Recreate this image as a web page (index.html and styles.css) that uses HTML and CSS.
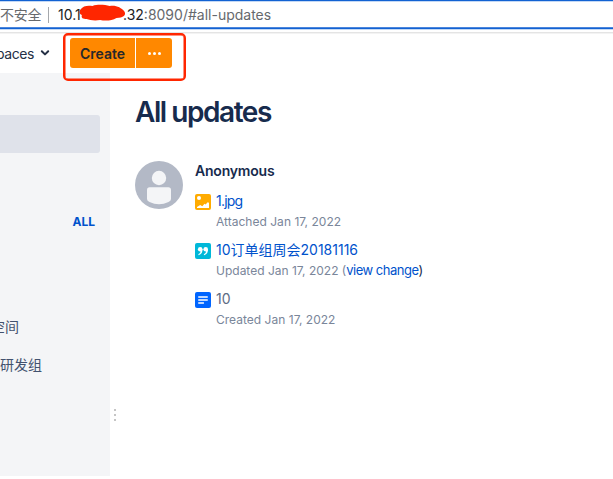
FILE: index.html
```
<!DOCTYPE html>
<html lang="zh">
<head>
<meta charset="utf-8">
<title>All updates</title>
<link rel="stylesheet" href="styles.css">
</head>
<body>
<div class="address">
  <span class="insecure">不安全</span>
  <span class="divider"></span>
  <span class="host">10.1</span>
  <span class="host-end">.32</span><span class="path">:8090/#all-updates</span>
  <svg class="scribble" width="48" height="18" viewBox="0 0 50 18" preserveAspectRatio="none"><path d="M2 5C4 2 9 1 14 2C20 0 27 1 32 2C39 1 44 4 47 7C50 11 46 14 39 14C34 17 27 17 22 16C16 17 11 16 8 15C4 15 2 14 3 11C0 10 0 7 2 5Z" fill="#ff2600"/></svg>
</div>
<header class="header">
  <span class="spaces">paces</span>
  <svg class="chevron" width="10" height="8" viewBox="0 0 10 8"><path d="M1.8 2.2L5 5.4L8.2 2.2" fill="none" stroke="#253045" stroke-width="2" stroke-linecap="round" stroke-linejoin="round"/></svg>
  <div class="create-group">
    <button class="create">Create</button>
    <button class="more" aria-label="More"><i></i><i></i><i></i></button>
    <span class="highlight"></span>
  </div>
</header>
<div class="page">
  <aside class="sidebar">
    <div class="selected"></div>
    <a class="all">ALL</a>
    <div class="space">空间</div>
    <div class="space team">研发组</div>
  </aside>
  <div class="handle"><i></i><i></i><i></i></div>
  <main class="content">
    <h1>All updates</h1>
    <div class="feed">
      <svg class="avatar" width="48" height="48" viewBox="0 0 48 48"><circle cx="24" cy="24" r="24" fill="#b3b9c6"/><circle cx="24" cy="17" r="7.2" fill="#f4f5f7"/><path d="M12 29Q12 26.3 14.7 26.3H33.3Q36 26.3 36 29V38Q36 40 33.5 41Q24 45.5 14.5 41Q12 40 12 38Z" fill="#f4f5f7"/></svg>
      <div class="updates">
        <div class="author">Anonymous</div>
        <div class="item">
          <svg width="16" height="16" viewBox="0 0 16 16"><rect width="16" height="16" rx="2" fill="#ffab00"/><circle cx="4" cy="4" r="2" fill="#fff"/><path d="M2 14V13L5.2 11L7.3 12.3L9.5 9.8L10.5 10.5L13 8L14 9.3V14Z" fill="#fff"/></svg>
          <div><a class="title jpg">1.jpg</a><p class="m1">Attached Jan 17, 2022</p></div>
        </div>
        <div class="item">
          <svg width="16" height="16" viewBox="0 0 16 16"><rect width="16" height="16" rx="2" fill="#00b8d9"/><g fill="#fff"><circle cx="5.2" cy="6.3" r="2.3"/><path d="M7.5 6C7.7 9 6.5 11.3 3.6 12.2L3.3 11.2C4.9 10.5 5.6 9.5 5.5 8Z"/><circle cx="10.7" cy="6.3" r="2.3"/><path d="M13 6C13.2 9 12 11.3 9.1 12.2L8.8 11.2C10.4 10.5 11.1 9.5 11 8Z"/></g></svg>
          <div><a class="title cjk">10订单组周会20181116</a><p class="m2">Updated Jan 17, 2022 (<a class="change">view change</a><b>)</b></p></div>
        </div>
        <div class="item">
          <svg width="16" height="16" viewBox="0 0 16 16"><rect width="16" height="16" rx="2" fill="#0065ff"/><path d="M3.7 5H12.3M3.7 8H12.3M3.7 11H8.5" stroke="#fff" stroke-width="1.3" stroke-linecap="round"/></svg>
          <div><a class="title plain">10</a><p class="m3">Created Jan 17, 2022</p></div>
        </div>
      </div>
    </div>
  </main>
</div>
</body>
</html>
```
FILE: styles.css
```
* { box-sizing: border-box; }
body {
  margin: 0;
  width: 613px;
  height: 479px;
  overflow: hidden;
  background: #fff;
  color: #172b4d;
  font-family: Inter, "Noto Sans CJK SC", sans-serif;
  font-size: 14px;
}
.address {
  position: relative;
  display: flex;
  align-items: center;
  height: 29px;
  border-top: 1px solid #1262d2;
  border-bottom: 1px solid #1262d2;
  box-shadow: inset 0 1px #c3d8f5, inset 0 -1px #4b86dc, 0 1px #c3d8f5;
  line-height: 20px;
  white-space: nowrap;
  color: #66696d;
}
.insecure { width: 41px; flex: none; letter-spacing: -.2px; }
.divider { width: 1px; height: 16px; margin: 0 9px 0 7px; background: #a5a8ac; }
.host { width: 65px; color: #202124; }
.host-end { color: #202124; }
.scribble { position: absolute; left: 79px; top: 3px; }
.header {
  display: flex;
  height: 44px;
  padding-top: 9px;
  background: linear-gradient(#e4e4e4 50%, #f3f3f3 50%) 0 3px / 100% 2px no-repeat;
}
.spaces { width: 34px; display: flex; justify-content: flex-end; line-height: 31px; color: #253045; letter-spacing: -.4px; }
.chevron { margin: 11px 20px 0 6px; flex: none; }
.create-group { position: relative; display: flex; gap: 1px; height: 30px; }
button { border: 0; padding: 0; background: #ff8800; font: inherit; }
.create { width: 65px; border-radius: 3px 0 0 3px; font-weight: 600; color: #26272b; }
.more { display: flex; width: 36px; align-items: center; justify-content: center; gap: 2px; border-radius: 0 3px 3px 0; }
.more i { width: 3px; height: 3px; border-radius: 50%; background: #fff; }
.highlight { position: absolute; left: -7px; top: -5px; width: 123px; height: 48px; border: 2px solid #ff2600; border-radius: 5px; box-shadow: inset 0 0 0 .5px #ff2600; }
.page { display: flex; height: 403px; }
.sidebar { width: 110px; flex: none; background: #f4f5f7; padding-top: 42px; }
.selected { width: 100px; height: 38px; border-radius: 0 3px 3px 0; background: #dfe2ea; }
.all { display: block; margin: 61px 15px 0 0; text-align: right; font-size: 12px; line-height: 16px; font-weight: 700; color: #0052cc; }
.space { width: 19px; display: flex; justify-content: flex-end; margin-top: 87px; line-height: 20px; color: #42526e; white-space: nowrap; }
.team { width: 42px; margin-top: 18px; }
.handle { display: flex; flex-direction: column; gap: 3px; width: 10px; padding: 336px 0 0 4px; flex: none; }
.handle i { width: 2px; height: 2px; background: #c5c5c5; }
.content { padding: 23px 0 0 15px; white-space: nowrap; }
h1 { margin: 0; font-size: 28px; line-height: 32px; font-weight: 600; letter-spacing: -1.45px; }
.feed { display: flex; gap: 12px; margin-top: 33px; }
.author { line-height: 20px; font-weight: 600; letter-spacing: -.2px; }
.item { display: flex; gap: 5px; height: 49px; }
.author + .item { margin-top: 10px; }
.item svg { margin-top: 3px; }
.title { display: block; line-height: 20px; color: #0052cc; }
.title.jpg { letter-spacing: -.8px; }
.title.plain { color: #5e6c84; }
.item p { margin: 0; font-size: 12px; line-height: 22px; color: #7a869a; letter-spacing: .02px; }
.item .m2 { line-height: 20px; letter-spacing: 0; }
.change { font-size: 13px; color: #0052cc; letter-spacing: -.5px; }
.item b { font-size: 13px; font-weight: 400; color: #172b4d; }
```
